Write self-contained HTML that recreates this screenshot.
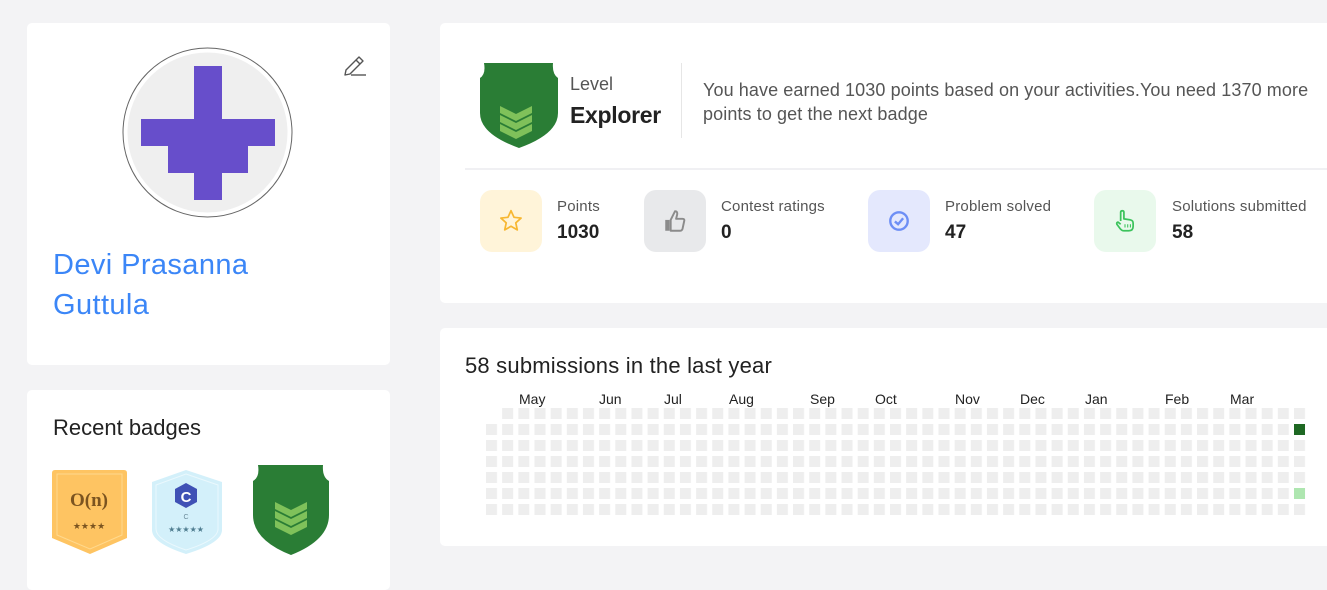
<!DOCTYPE html>
<html><head><meta charset="utf-8"><style>
*{margin:0;padding:0;box-sizing:border-box}
body{width:1327px;height:571px;background:#f3f3f5;font-family:"Liberation Sans",sans-serif;position:relative;overflow:hidden;color:#222}
.card{position:absolute;background:#fff;border-radius:5px}
.t{position:absolute;white-space:nowrap}
.ib{position:absolute;width:62px;height:62px;border-radius:12px;display:flex;align-items:center;justify-content:center}
.lab{font-size:15px;color:#555;letter-spacing:0.2px}
.val{font-size:19px;font-weight:bold;color:#222}
</style></head><body>

<div class="card" style="left:27px;top:23px;width:363px;height:342px"></div>
<div class="card" style="left:27px;top:390px;width:363px;height:200px"></div>
<div class="card" style="left:440px;top:23px;width:900px;height:280px"></div>
<div class="card" style="left:440px;top:328px;width:900px;height:218px"></div>

<svg style="position:absolute;left:0;top:0" width="400" height="571">
<circle cx="207.5" cy="132.5" r="84.5" fill="#fff" stroke="#666" stroke-width="1"/>
<circle cx="207.5" cy="132.5" r="80" fill="#efefef"/>
<path d="M194 66H222V119H275V146H248V173H222V200H194V173H168V146H141V119H194Z" fill="#674ecb"/>
<g fill="none" stroke="#555" stroke-width="1.4" stroke-linejoin="round"><path d="M346 70L359 57L363 61L350 74L345 75Z"/><path d="M356 60L360 64"/><path d="M351 75H366"/></g>
</svg>
<div class="t" style="left:53px;top:245px;font-size:29px;line-height:40px;color:#3b86f7;letter-spacing:0.4px">Devi Prasanna<br>Guttula</div>
<div class="t" style="left:53px;top:415px;font-size:22px;color:#222">Recent badges</div>

<svg style="position:absolute;left:0;top:455px" width="400" height="116">
<path d="M55 15H124Q127 15 127 18V83L90 99L52 83V18Q52 15 55 15Z" fill="#fec462"/>
<path d="M57 19H122V80L90 94L57 80Z" fill="none" stroke="#ffd98e" stroke-width="1"/>
<text x="89" y="51" text-anchor="middle" font-family="Liberation Serif,serif" font-weight="bold" font-size="19" fill="#7b5420">O(n)</text>
<text x="89" y="74" text-anchor="middle" font-size="9" fill="#7b5420">★★★★</text>
<path d="M186 15L222 27V75Q222 88 186 99Q152 88 152 75V27Z" fill="#d3f0fa"/>
<path d="M186 19L218 30V74Q218 85 186 95Q156 85 156 74V30Z" fill="none" stroke="#eaf8fd" stroke-width="1"/>
<path d="M186 28L197 34V47L186 53L175 47V34Z" fill="#3f51b5"/>
<text x="186" y="47" text-anchor="middle" font-weight="bold" font-size="15" fill="#fff">C</text>
<text x="186" y="64" text-anchor="middle" font-size="7" fill="#6a8a99">C</text>
<text x="186" y="77" text-anchor="middle" font-size="8" fill="#4f7d90">★★★★★</text>
<path d="M258 10H323Q322 22 329 26V60Q329 85 291 100Q253 85 253 60V26Q260 22 258 10Z" fill="#2a7d35"/>
<path d="M275 47L291 55L307 47V54L291 62L275 54ZM275 56L291 64L307 56V63L291 71L275 63ZM275 65L291 73L307 65V72L291 80L275 72Z" fill="#7fc15a"/>
</svg>

<svg style="position:absolute;left:478px;top:61px" width="82" height="90">
<path d="M6 2H75Q74 13 80 17V52Q80 73 41 87Q2 73 2 52V17Q8 13 6 2Z" fill="#2a7d35"/>
<path d="M22 45L38 53L54 45V52L38 60L22 52ZM22 54L38 62L54 54V61L38 69L22 61ZM22 63L38 71L54 63V70L38 78L22 70Z" fill="#7fc15a"/>
</svg>
<div class="t" style="left:570px;top:74px;font-size:18px;color:#555">Level</div>
<div class="t" style="left:570px;top:102px;font-size:23px;font-weight:bold;color:#222;letter-spacing:-0.3px">Explorer</div>
<div style="position:absolute;left:681px;top:63px;width:1px;height:75px;background:#e6e6e6"></div>
<div class="t" style="left:703px;top:78px;font-size:18px;line-height:24px;color:#555;letter-spacing:0.1px">You have earned 1030 points based on your activities.You need 1370 more<br>points to get the next badge</div>
<div style="position:absolute;left:465px;top:168px;width:862px;height:2px;background:#f0f0f3"></div>

<div class="ib" style="left:480px;top:190px;background:#fff4d9"><svg width="26" height="26" viewBox="0 0 24 24"><path d="M12 2.5L14.8 8.6L21.3 9.3L16.4 13.7L17.8 20.2L12 16.9L6.2 20.2L7.6 13.7L2.7 9.3L9.2 8.6Z" fill="none" stroke="#f7b731" stroke-width="1.6" stroke-linejoin="round"/></svg></div>
<div class="t lab" style="left:557px;top:198px">Points</div><div class="t val" style="left:557px;top:222px">1030</div>
<div class="ib" style="left:644px;top:190px;background:#e8e9eb"><svg width="26" height="26" viewBox="0 0 24 24"><path d="M3 11H7V21H3Z" fill="#8b8b8b"/><path d="M8 11L12 3Q14.5 3 14 6L13 10H19Q21 10 20.5 12L19 19Q18.5 21 16.5 21H8Z" fill="none" stroke="#8b8b8b" stroke-width="1.8" stroke-linejoin="round"/></svg></div>
<div class="t lab" style="left:721px;top:198px">Contest ratings</div><div class="t val" style="left:721px;top:222px">0</div>
<div class="ib" style="left:868px;top:190px;background:#e4e8fd"><svg width="22" height="22" viewBox="0 0 24 24"><circle cx="12" cy="12" r="9.5" fill="none" stroke="#6d8ef5" stroke-width="2.6"/><path d="M7.5 12.5L11 15.5L16.5 9" fill="none" stroke="#6d8ef5" stroke-width="2.6"/></svg></div>
<div class="t lab" style="left:945px;top:198px">Problem solved</div><div class="t val" style="left:945px;top:222px">47</div>
<div class="ib" style="left:1094px;top:190px;background:#e9f9ec"><svg width="26" height="26" viewBox="0 0 24 24"><path d="M8 12V4Q8 2.5 9.5 2.5Q11 2.5 11 4V10L17 11Q19.5 11.5 19.5 14V17Q19.5 21 15.5 21H11Q9 21 7.5 19L4.5 15Q4 13.5 5.5 13L8 15" fill="none" stroke="#3cc35c" stroke-width="1.6" stroke-linejoin="round"/><path d="M12 15V18M14.5 15V18M17 15V18" stroke="#3cc35c" stroke-width="1"/></svg></div>
<div class="t lab" style="left:1172px;top:198px">Solutions submitted</div><div class="t val" style="left:1172px;top:222px">58</div>

<div class="t" style="left:465px;top:353px;font-size:22px;color:#222;letter-spacing:0.2px">58 submissions in the last year</div>
<svg style="position:absolute;left:0;top:380px" width="1327" height="150">
<defs><pattern id="p" x="486" y="28" width="16.16" height="16" patternUnits="userSpaceOnUse"><rect width="11" height="11" fill="#eeeeee"/></pattern></defs>
<rect x="486" y="44" width="820" height="96" fill="url(#p)"/>
<rect x="502" y="28" width="804" height="11" fill="url(#p)"/>
<rect x="1294" y="44" width="11" height="11" fill="#1e6823"/>
<rect x="1294" y="108" width="11" height="11" fill="#aee6b0"/>
<g font-size="14" fill="#222">
<text x="519" y="24">May</text><text x="599" y="24">Jun</text><text x="664" y="24">Jul</text><text x="729" y="24">Aug</text><text x="810" y="24">Sep</text><text x="875" y="24">Oct</text><text x="955" y="24">Nov</text><text x="1020" y="24">Dec</text><text x="1085" y="24">Jan</text><text x="1165" y="24">Feb</text><text x="1230" y="24">Mar</text>
</g>
</svg>
</body></html>
